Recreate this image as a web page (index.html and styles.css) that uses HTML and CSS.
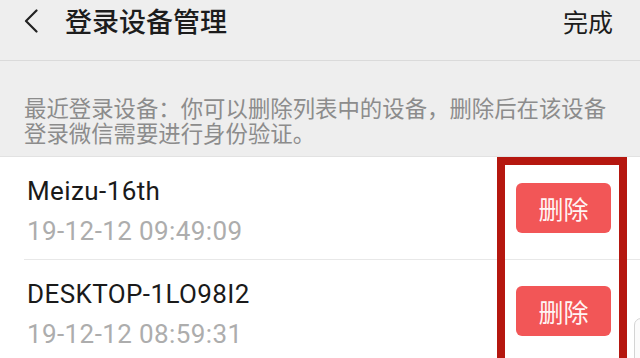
FILE: index.html
```html
<!DOCTYPE html>
<html lang="zh-CN">
<head>
<meta charset="utf-8">
<title>登录设备管理</title>
<link rel="stylesheet" href="styles.css">
</head>
<body>
<div class="page">
  <header class="topbar">
    <svg class="back" width="14" height="24" viewBox="0 0 14 24"><path d="M12.5 1.5 L2 12 L12.5 22.5" fill="none" stroke="#222" stroke-width="2.2" stroke-linecap="round" stroke-linejoin="round"/></svg>
    <h1 class="title">登录设备管理</h1>
    <span class="done">完成</span>
  </header>
  <p class="desc">最近登录设备：你可以删除列表中的设备，删除后在该设备登录微信需要进行身份验证。</p>
  <div class="list">
    <div class="row">
      <div class="info">
        <div class="name">Meizu-16th</div>
        <div class="time">19-12-12 09:49:09</div>
      </div>
      <button class="del">删除</button>
    </div>
    <div class="row">
      <div class="info">
        <div class="name">DESKTOP-1LO98I2</div>
        <div class="time">19-12-12 08:59:31</div>
      </div>
      <button class="del">删除</button>
    </div>
    <div class="mark"></div>
    <div class="float-tab"></div>
  </div>
</div>
</body>
</html>
```

FILE: styles.css
```css
* { box-sizing: border-box; }
html, body { margin: 0; padding: 0; }
body {
  width: 640px;
  height: 358px;
  overflow: hidden;
  background: #eeeeee;
  font-family: Roboto, "Noto Sans CJK SC", sans-serif;
}
.page { width: 640px; }
.topbar {
  height: 61px;
  display: flex;
  align-items: center;
  padding: 0 27px 18px 24px;
  border-bottom: 1px solid #dadada;
  background: #eeeeee;
}
.back { flex: none; display: block; }
.title {
  margin: 0 0 0 27px;
  font-family: "Noto Sans CJK SC", sans-serif;
  font-size: 27px;
  font-weight: 500;
  color: #1c1c1c;
  line-height: 30px;
}
.done {
  margin-left: auto;
  font-family: "Noto Sans CJK SC", sans-serif;
  font-size: 25px;
  color: #1c1c1c;
  line-height: 30px;
}
.desc {
  margin: 0;
  padding: 34px 26px 11px 24px;
  font-family: "Noto Sans CJK SC", sans-serif;
  font-size: 22.4px;
  line-height: 25px;
  color: #8c8c8c;
  border-bottom: 1px solid #e2e2e2;
}
.list {
  position: relative;
  background: #ffffff;
  height: 201px;
  overflow: hidden;
}
.row {
  display: flex;
  align-items: center;
  margin-left: 24px;
  padding: 0 29px 0 3px;
  height: 103px;
  border-bottom: 1px solid #e8e8e8;
}
.info { flex: 1; padding-top: 5px; }
.name {
  font-size: 26px;
  letter-spacing: 0.4px;
  line-height: 30px;
  color: #1a1a1a;
}
.time {
  margin-top: 10px;
  font-size: 26px;
  letter-spacing: 0.4px;
  line-height: 30px;
  color: #adadad;
}
.del {
  width: 95px;
  height: 50px;
  border: none;
  border-radius: 6px;
  background: #f25657;
  color: #fff4f4;
  font-family: "Noto Sans CJK SC", sans-serif;
  font-size: 25px;
  padding: 0;
}
.mark {
  position: absolute;
  left: 497px;
  top: 0;
  width: 130px;
  height: 230px;
  border: 8px solid #b5170f;
}
.float-tab {
  position: absolute;
  left: 634px;
  top: 161px;
  width: 24px;
  height: 60px;
  border: 1px solid #d4d4d4;
  border-radius: 7px;
  background: #fbfbfb;
}
```
